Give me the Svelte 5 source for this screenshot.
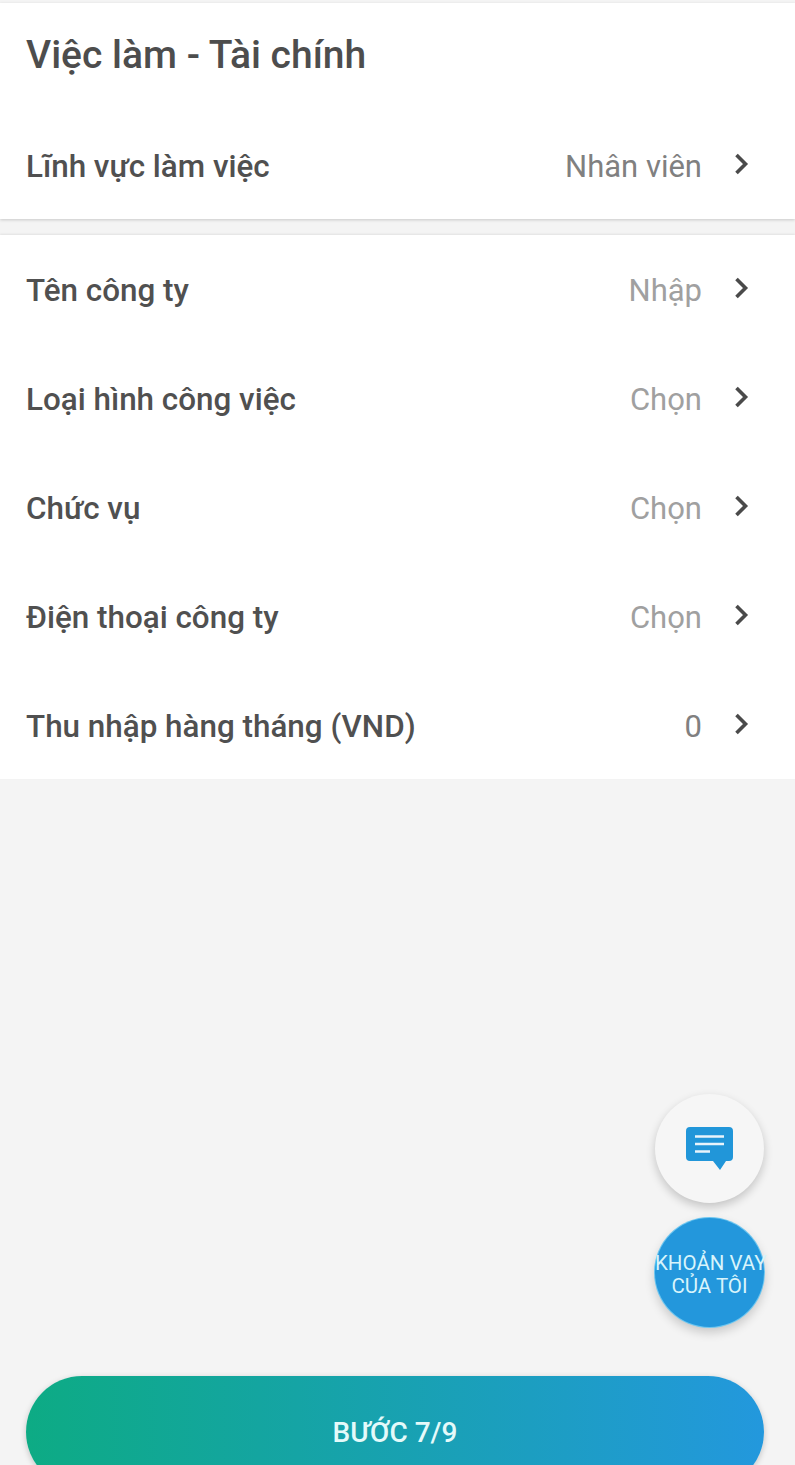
<script>
  const rows = [
    { label: 'Tên công ty', value: 'Nhập', tone: 'placeholder' },
    { label: 'Loại hình công việc', value: 'Chọn', tone: 'placeholder' },
    { label: 'Chức vụ', value: 'Chọn', tone: 'placeholder' },
    { label: 'Điện thoại công ty', value: 'Chọn', tone: 'placeholder' },
    { label: 'Thu nhập hàng tháng (VND)', value: '0', tone: 'filled' }
  ];
</script>

<main class="page">
  <section class="card first">
    <h1>Việc làm - Tài chính</h1>
    <div class="row short">
      <span class="label">Lĩnh vực làm việc</span>
      <span class="value filled">Nhân viên</span>
      <svg class="chev" viewBox="0 0 20 30" aria-hidden="true"><path d="M5.5 6L14.5 15 5.5 24" /></svg>
    </div>
  </section>

  <section class="card second">
    {#each rows as r}
      <div class="row">
        <span class="label">{r.label}</span>
        <span class="value {r.tone}">{r.value}</span>
        <svg class="chev" viewBox="0 0 20 30" aria-hidden="true"><path d="M5.5 6L14.5 15 5.5 24" /></svg>
      </div>
    {/each}
  </section>

  <div class="fabs">
    <button class="fab chat" aria-label="Chat">
      <svg viewBox="0 0 48 44" width="48" height="44" aria-hidden="true">
        <path class="bubble" d="M4 0h39a4 4 0 0 1 4 4v26a4 4 0 0 1-4 4h-3l-6 9-7-9H4a4 4 0 0 1-4-4V4a4 4 0 0 1 4-4z" />
        <path class="lines" d="M9 9.5h29M9 17h29M9 24.5h15" />
      </svg>
    </button>
    <button class="fab loan">KHOẢN VAY<br />CỦA TÔI</button>
  </div>

  <button class="next">BƯỚC 7/9</button>
</main>

<style>
  :global(body) {
    margin: 0;
    background: #f4f4f4;
  }

  .page {
    position: relative;
    height: 1465px;
    overflow: hidden;
    padding-top: 3px;
    box-sizing: border-box;
    background: #f4f4f4;
    font-family: Roboto, "Noto Sans", sans-serif;
    color: #4a4a4a;
  }

  .card {
    background: #fff;
  }

  .first {
    height: 216px;
    box-shadow: 0 1px 3px rgba(0, 0, 0, 0.18);
  }

  .second {
    margin-top: 16px;
    height: 544px;
    box-shadow: 0 -1px 2px rgba(0, 0, 0, 0.08);
  }

  h1 {
    margin: 0;
    padding: 27px 26px 0;
    height: 82px;
    box-sizing: border-box;
    font-size: 39px;
    line-height: 50px;
    font-weight: 500;
    color: #4d4d4d;
  }

  .row {
    display: flex;
    align-items: center;
    height: 109px;
    padding: 0 44px 0 26px;
    font-size: 31px;
    line-height: 36px;
  }

  .short {
    margin-top: 27px;
  }

  .first .row {
    height: 107px;
  }

  .label {
    flex: 1;
    font-size: 31.4px;
    font-weight: 500;
    color: #505050;
    padding-top: 2px;
  }

  .value {
    margin-right: 29px;
    font-weight: 400;
    padding-top: 2px;
  }

  .placeholder {
    color: #a0a0a0;
  }

  .filled {
    color: #808080;
  }

  .chev {
    width: 20px;
    height: 30px;
    flex: none;
    margin-top: -3px;
  }

  .chev path {
    fill: none;
    stroke: #4a4a4a;
    stroke-width: 3.6;
  }

  .fabs {
    position: absolute;
    left: 655px;
    top: 1094px;
    display: flex;
    flex-direction: column;
    gap: 15px;
  }

  .fab {
    width: 109px;
    height: 109px;
    padding: 0;
    border: 0;
    border-radius: 50%;
    box-shadow: 0 4px 10px rgba(0, 0, 0, 0.2);
    font-family: inherit;
  }

  .chat {
    display: flex;
    align-items: center;
    justify-content: center;
    background: #f6f6f6;
    padding-top: 0;
  }

  .bubble {
    fill: #2196d9;
  }

  .lines {
    fill: none;
    stroke: #e8f4fb;
    stroke-width: 2.6;
  }

  .loan {
    background: #2397dc;
    color: #d8f4fb;
    font-size: 20.5px;
    line-height: 23px;
    white-space: nowrap;
    padding-top: 4px;
    box-shadow: 0 0 0 1px #6cc6f0, 0 5px 11px rgba(0, 0, 0, 0.2);
  }

  .next {
    position: absolute;
    left: 26px;
    top: 1376px;
    width: 738px;
    height: 112px;
    border: 0;
    border-radius: 56px;
    background: linear-gradient(90deg, #0dab84, #2398dd);
    box-shadow: 0 2px 6px rgba(0, 0, 0, 0.2);
    color: #e4fafa;
    font-family: inherit;
    font-size: 28px;
    font-weight: 500;
    padding: 0;
  }
</style>
